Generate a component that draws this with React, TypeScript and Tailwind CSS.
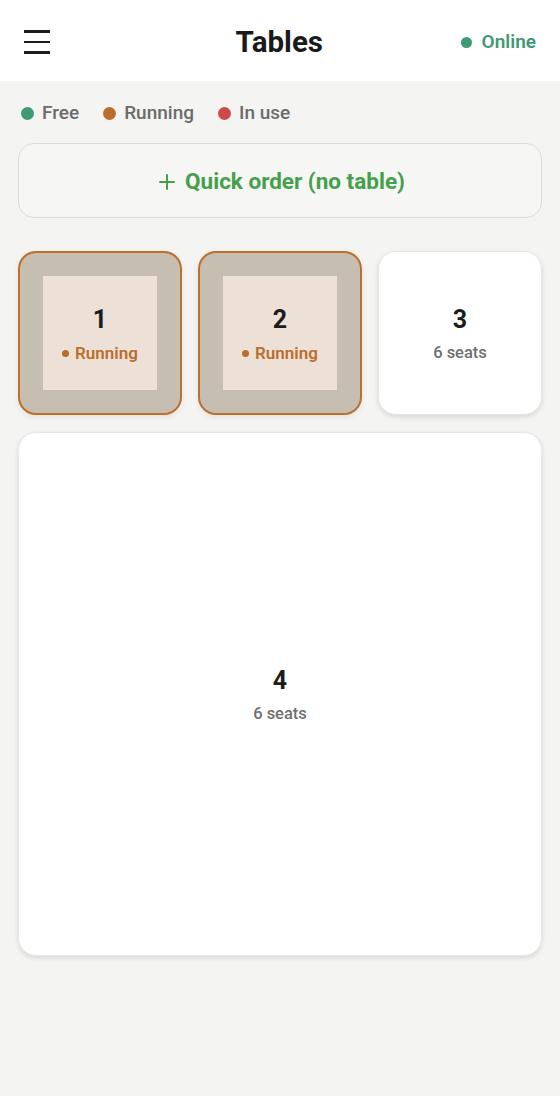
import { Plus } from 'lucide-react';

type TableItem = {
  id: number;
  seats: number;
  status: 'free' | 'running' | 'inuse';
  big?: boolean;
};

const tables: TableItem[] = [
  { id: 1, seats: 4, status: 'running' },
  { id: 2, seats: 4, status: 'running' },
  { id: 3, seats: 6, status: 'free' },
  { id: 4, seats: 6, status: 'free', big: true },
];

function TableCard({ t }: { t: TableItem }) {
  if (t.status === 'running') {
    return (
      <button className="aspect-square rounded-[18px] border-2 border-[#bf6e2c] bg-[#c7beb2] p-[23px] shadow-[0_2px_6px_rgba(0,0,0,0.08)]">
        <div className="flex h-full w-full flex-col items-center justify-center bg-[#ede1d7] pt-[3px]">
          <span className="text-[25px] font-bold leading-none text-[#1c1c1c]">{t.id}</span>
          <span className="mt-[13px] flex items-center gap-[6px] text-[17px] font-semibold leading-none text-[#bd6d2b]">
            <span className="h-[7px] w-[7px] rounded-full bg-[#bd6d2b]" />
            Running
          </span>
        </div>
      </button>
    );
  }
  return (
    <button
      className={`aspect-square flex flex-col items-center justify-center rounded-[18px] border border-[#e6e6e4] bg-white pt-[2px] shadow-[0_2px_5px_rgba(0,0,0,0.12)] ${
        t.big ? 'col-span-3' : ''
      }`}
    >
      <span className="text-[25px] font-bold leading-none text-[#1c1c1c]">{t.id}</span>
      <span className="mt-[13px] text-[16.5px] font-medium leading-none text-[#6f6f6f]">{t.seats} seats</span>
    </button>
  );
}

export default function App() {
  return (
    <div className="min-h-[1096px] bg-[#f4f4f2] font-['Roboto',sans-serif]">
      <header className="flex h-[81px] items-center justify-between bg-white px-6 pt-[3px]">
        <button className="flex w-[26px] flex-col gap-[8px]" aria-label="Menu">
          <span className="h-[2.5px] w-full bg-[#1c1c1c]" />
          <span className="h-[2.5px] w-full bg-[#1c1c1c]" />
          <span className="h-[2.5px] w-full bg-[#1c1c1c]" />
        </button>
        <h1 className="pl-[48px] text-[29.5px] font-bold text-[#1a1a1a]">Tables</h1>
        <div className="flex items-center gap-[10px] text-[19px] font-semibold text-[#3f9a72]">
          <span className="h-[11px] w-[11px] rounded-full bg-[#3f9a72]" />
          Online
        </div>
      </header>

      <main className="px-[18px]">
        <div className="flex h-[62px] items-center gap-[24px] pl-[3px] pt-[3px] text-[19px] font-medium text-[#6b6b6b]">
          <span className="flex items-center gap-[8px]">
            <span className="h-[13px] w-[13px] rounded-full bg-[#3f9a72]" />
            Free
          </span>
          <span className="flex items-center gap-[8px]">
            <span className="h-[13px] w-[13px] rounded-full bg-[#bd6d2b]" />
            Running
          </span>
          <span className="flex items-center gap-[8px]">
            <span className="h-[13px] w-[13px] rounded-full bg-[#cc4a4a]" />
            In use
          </span>
        </div>

        <button className="flex h-[75px] w-full items-center justify-center gap-[6px] rounded-[16px] border border-[#dcdcda] bg-[#f6f6f4] pt-[3px] text-[22.5px] font-bold text-[#45a04b]">
          <Plus size={24} strokeWidth={2} />
          Quick order (no table)
        </button>

        <div className="mt-[33px] grid grid-cols-3 gap-x-[16px] gap-y-[17px]">
          {tables.map((t) => (
            <TableCard key={t.id} t={t} />
          ))}
        </div>
      </main>
    </div>
  );
}
